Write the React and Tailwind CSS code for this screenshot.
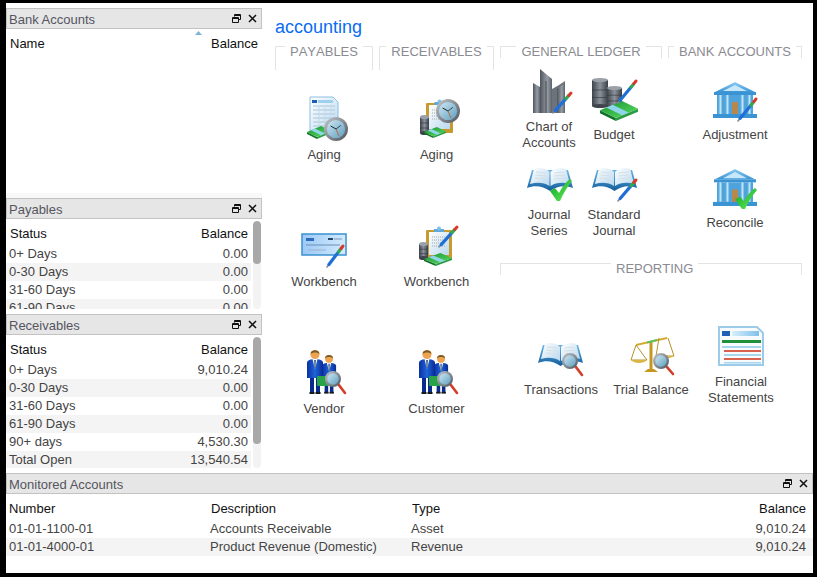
import React from 'react';

const font = { fontFamily: '"Liberation Sans", Arial, sans-serif' };

const Defs = () => (
  <svg className="block h-0 w-0" aria-hidden="true">
    <defs>
      <linearGradient id="money" x1="0" y1="0" x2="1" y2="1">
        <stop offset="0" stopColor="#178f35" />
        <stop offset="1" stopColor="#5be05f" />
      </linearGradient>
      <linearGradient id="steel" x1="0" y1="0" x2="1" y2="0">
        <stop offset="0" stopColor="#3f444c" />
        <stop offset="0.5" stopColor="#8b929b" />
        <stop offset="1" stopColor="#3a3f47" />
      </linearGradient>
      <linearGradient id="slab" x1="0" y1="0" x2="1" y2="0">
        <stop offset="0" stopColor="#4e545d" />
        <stop offset="0.6" stopColor="#989da5" />
        <stop offset="1" stopColor="#5c626b" />
      </linearGradient>
      <linearGradient id="face" x1="0" y1="0" x2="1" y2="1">
        <stop offset="0" stopColor="#cfe7f2" />
        <stop offset="1" stopColor="#5e9fc0" />
      </linearGradient>
      <linearGradient id="ring" x1="0" y1="0" x2="1" y2="1">
        <stop offset="0" stopColor="#c4c9ce" />
        <stop offset="1" stopColor="#4c5259" />
      </linearGradient>
      <linearGradient id="bank" x1="0" y1="0" x2="0" y2="1">
        <stop offset="0" stopColor="#8fcdf2" />
        <stop offset="1" stopColor="#3a94d4" />
      </linearGradient>
      <linearGradient id="column" x1="0" y1="0" x2="1" y2="0">
        <stop offset="0" stopColor="#3f9ad8" />
        <stop offset="0.5" stopColor="#bde5fa" />
        <stop offset="1" stopColor="#3a92cf" />
      </linearGradient>
      <linearGradient id="check" x1="0" y1="0" x2="1" y2="1">
        <stop offset="0" stopColor="#08a02a" />
        <stop offset="1" stopColor="#6af055" />
      </linearGradient>
      <linearGradient id="cheque" x1="0" y1="0" x2="1" y2="0">
        <stop offset="0" stopColor="#9cc9f6" />
        <stop offset="1" stopColor="#d3eaff" />
      </linearGradient>
      <linearGradient id="page" x1="0" y1="0" x2="1" y2="1">
        <stop offset="0" stopColor="#ffffff" />
        <stop offset="1" stopColor="#b9d8ee" />
      </linearGradient>
      <linearGradient id="cover" x1="0" y1="0" x2="0" y2="1">
        <stop offset="0" stopColor="#6fb6e6" />
        <stop offset="1" stopColor="#0f5c9c" />
      </linearGradient>
      <linearGradient id="suit" x1="0" y1="0" x2="1" y2="0">
        <stop offset="0" stopColor="#0c2fa4" />
        <stop offset="0.5" stopColor="#1d66d8" />
        <stop offset="1" stopColor="#0b2a94" />
      </linearGradient>
      <linearGradient id="title" x1="0" y1="0" x2="1" y2="0">
        <stop offset="0" stopColor="#d8effb" />
        <stop offset="1" stopColor="#7fc0ea" />
      </linearGradient>
    </defs>
  </svg>
);

const Pen = ({ x1, y1, x2, y2 }) => {
  const at = (t) => [x1 + (x2 - x1) * t, y1 + (y2 - y1) * t];
  const [ax, ay] = at(0.12);
  const [bx, by] = at(0.72);
  const [cx, cy] = at(0.88);
  return (
    <g strokeLinecap="round">
      <line x1={x1} y1={y1} x2={ax} y2={ay} stroke="#7d8a99" strokeWidth="1.6" />
      <line x1={ax} y1={ay} x2={bx} y2={by} stroke="#1f6fd6" strokeWidth="3.2" />
      <line x1={bx} y1={by} x2={cx} y2={cy} stroke="#33a853" strokeWidth="3.2" />
      <line x1={cx} y1={cy} x2={x2} y2={y2} stroke="#d9392b" strokeWidth="3" />
    </g>
  );
};

const Money = ({ x, y, w, h }) => (
  <g transform={`translate(${x} ${y}) scale(${w / 24} ${h / 13})`}>
    <polygon points="0,6 10,11 10,13 0,8" fill="#11722b" />
    <polygon points="10,11 24,5 24,7 10,13" fill="#2a9c45" />
    <polygon points="0,6 14,0 24,5 10,11" fill="url(#money)" />
    <polygon points="4,4.2 8,2.5 18,7.5 14,9.2" fill="#8fd6ea" />
  </g>
);

const Clock = ({ cx, cy, r }) => (
  <g>
    <circle cx={cx} cy={cy} r={r} fill="url(#ring)" />
    <circle cx={cx} cy={cy} r={r * 0.76} fill="url(#face)" />
    <line x1={cx} y1={cy} x2={cx - r * 0.45} y2={cy - r * 0.25} stroke="#20262c" strokeWidth="1" />
    <line x1={cx} y1={cy} x2={cx + r * 0.25} y2={cy + r * 0.6} stroke="#b5683a" strokeWidth="1" />
    <line x1={cx} y1={cy} x2={cx + r * 0.4} y2={cy - r * 0.3} stroke="#20262c" strokeWidth="0.8" />
  </g>
);

const Lens = ({ cx, cy, r, hx, hy }) => (
  <g>
    <line x1={cx + r * 0.7} y1={cy + r * 0.7} x2={hx} y2={hy} stroke="#d2402c" strokeWidth="2.6" strokeLinecap="round" />
    <circle cx={cx} cy={cy} r={r} fill="url(#ring)" />
    <circle cx={cx} cy={cy} r={r * 0.72} fill="url(#face)" />
  </g>
);

const Tick = ({ x, y, w, h }) => (
  <g transform={`translate(${x} ${y}) scale(${w / 22} ${h / 22})`}>
    <path d="M0 12 L5 9 L9 14 C12 8 16 3 20 0 L22 2 C17 8 13 15 10 22 L7 22 Z" fill="url(#check)" />
  </g>
);

const Cylinder = ({ x, y, w, h }) => (
  <g>
    <rect x={x} y={y + 2} width={w} height={h - 4} fill="url(#steel)" />
    <ellipse cx={x + w / 2} cy={y + h - 2} rx={w / 2} ry="2" fill="#3f444c" />
    <ellipse cx={x + w / 2} cy={y + 2} rx={w / 2} ry="2" fill="#9aa0a8" />
    <line x1={x} y1={y + h * 0.4} x2={x + w} y2={y + h * 0.4} stroke="#30343a" strokeWidth="0.6" />
    <line x1={x} y1={y + h * 0.65} x2={x + w} y2={y + h * 0.65} stroke="#30343a" strokeWidth="0.6" />
  </g>
);

const Clipboard = ({ x, y, w, h }) => (
  <g>
    <rect x={x} y={y + 3} width={w} height={h - 3} rx="1" fill="#c79a2f" />
    <rect x={x + 3} y={y + 5} width={w - 6} height={h - 9} fill="url(#page)" />
    {[10, 13, 16, 19].map((d) => (
      <line key={d} x1={x + 6} y1={y + d} x2={x + w - 7} y2={y + d} stroke="#a9a9a9" strokeWidth="1" strokeDasharray="1 1" />
    ))}
    <rect x={x + w / 2 - 5} y={y + 2} width="10" height="3" fill="#5ea9dc" />
    <circle cx={x + w / 2} cy={y + 1.5} r="2" fill="#7cbfe8" />
  </g>
);

const Bank = ({ x, y, w, h }) => (
  <g transform={`translate(${x} ${y}) scale(${w / 44} ${h / 36})`}>
    <polygon points="22,0 42,10 2,10" fill="url(#bank)" />
    <polygon points="22,3 34,9 10,9" fill="#c6e8fa" />
    <rect x="1" y="10" width="42" height="3" fill="#3a94d4" />
    <rect x="4" y="13" width="36" height="19" fill="#4ea3dc" />
    {[5, 12, 27, 34].map((cx) => (
      <rect key={cx} x={cx} y="13" width="5" height="19" fill="url(#column)" />
    ))}
    <rect x="19" y="20" width="6" height="12" fill="#b8874a" />
    <rect x="0" y="32" width="44" height="4" fill="#3a94d4" />
  </g>
);

const Book = ({ x, y, w, h }) => (
  <g transform={`translate(${x} ${y}) scale(${w / 46} ${h / 23})`}>
    <path d="M5 2 L0 20 C8 17 16 18 23 23 C30 18 38 17 46 20 L41 2 Z" fill="url(#cover)" />
    <path d="M7 1 C12 -1 19 0 22.5 4 L22.5 18 C17 14.500 10 14 3 16 Z" fill="url(#page)" />
    <path d="M39 1 C34 -1 27 0 23.5 4 L23.5 18 C29 14.500 36 14 43 16 Z" fill="url(#page)" />
    <path d="M9 4 L19 5 M8.500 7 L19 8 M8 10 L19 11 M27 5 L37 4 M27 8 L37.500 7 M27 11 L38 10" stroke="#d5dfe6" strokeWidth="1" fill="none" />
  </g>
);

const Person = ({ x, y, s }) => (
  <g transform={`translate(${x} ${y}) scale(${s})`}>
    <rect x="3" y="28" width="4" height="16" fill="#0a2a8c" />
    <rect x="9" y="28" width="4" height="16" fill="#0a2a8c" />
    <rect x="2.500" y="43" width="5" height="2" fill="#14181f" />
    <rect x="8.500" y="43" width="5" height="2" fill="#14181f" />
    <path d="M0 14 C0 11 4 10 8 10 C12 10 16 11 16 14 L16 29 L0 29 Z" fill="url(#suit)" />
    <polygon points="5.500,10 10.500,10 8,20" fill="#ffffff" />
    <polygon points="7.300,11 8.700,11 8.400,19 7.600,19" fill="#12315e" />
    <circle cx="8" cy="5.500" r="4.500" fill="#eea24e" />
    <path d="M3.500 5 C3.500 0 12.500 0 12.500 5 C10 3 6 3 3.500 5 Z" fill="#7a5a2a" />
  </g>
);

const icons = {
  agingPay: (
    <>
      <path d="M10 1 H33 L38 6 V37 H10 Z" fill="url(#page)" stroke="#8cc0e4" />
      <rect x="12" y="4" width="5" height="3" fill="#1f5fb5" />
      <rect x="18" y="4" width="15" height="3" fill="#9fd0ee" />
      {[10, 14, 18, 22, 26, 30].map((d) => (
        <line key={d} x1="13" y1={d} x2="35" y2={d} stroke="#a7c6dd" />
      ))}
      {[19, 25, 31].map((d) => (
        <line key={d} x1={d} y1="10" x2={d} y2="32" stroke="#c4d9e8" />
      ))}
      <Money x={7} y={30} w={24} h={13} />
      <Clock cx={36} cy={33} r={12} />
    </>
  ),
  agingRec: (
    <>
      <Clipboard x={13} y={4} w={27} h={33} />
      <Cylinder x={7} y={19} w={9} h={20} />
      <Money x={11} y={31} w={22} h={11} />
      <Clock cx={35} cy={15} r={12} />
    </>
  ),
  cheque: (
    <>
      <rect x="2" y="11" width="44" height="21" fill="url(#cheque)" stroke="#3a91cf" strokeWidth="1.500" />
      <rect x="6" y="15" width="8" height="3" fill="#2b6bbd" />
      <rect x="28" y="15" width="5" height="2" fill="#27466e" />
      <line x1="34" y1="16" x2="42" y2="16" stroke="#7d97b4" />
      <line x1="6" y1="22" x2="40" y2="22" stroke="#6f8fb2" />
      <line x1="8" y1="27" x2="26" y2="27" stroke="#9ab4cf" />
      <Pen x1={27} y1={44} x2={43} y2={23} />
    </>
  ),
  workbenchRec: (
    <>
      <Clipboard x={14} y={4} w={26} h={32} />
      <Cylinder x={7} y={19} w={9} h={18} />
      <Money x={12} y={30} w={28} h={13} />
      <Pen x1={27} y1={24} x2={45} y2={4} />
    </>
  ),
  people: (
    <>
      <Person x={22} y={4} s={0.88} />
      <Person x={7} y={-1} s={1} />
      <rect x="17" y="26" width="14" height="10" rx="1" fill="#2aa24a" />
      <Lens cx={33} cy={29} r={8} hx={45} hy={43} />
    </>
  ),
  chart: (
    <g transform="translate(0 -1)">
      <polygon points="8,16 15,20 15,46 8,46" fill="url(#slab)" />
      <polygon points="15,2 27,12 27,46 15,46" fill="url(#slab)" />
      <polygon points="27,22 34,18 40,14 40,46 27,46" fill="#6d737b" />
      <polygon points="32,22 40,16 40,46 32,46" fill="url(#slab)" />
      <line x1="21" y1="14" x2="21" y2="46" stroke="#454a52" />
      <Pen x1={28} y1={46} x2={46} y2={26} />
    </g>
  ),
  budget: (
    <g transform="translate(0 -3)">
      <Cylinder x={2} y={5} w={16} h={30} />
      <Cylinder x={17} y={13} w={15} h={23} />
      <Money x={10} y={28} w={38} h={20} />
      <Pen x1={28} y1={30} x2={46} y2={8} />
    </g>
  ),
  adjustment: (
    <g transform="translate(0 -3)">
      <Bank x={2} y={9} w={44} h={36} />
      <Pen x1={27} y1={48} x2={45} y2={26} />
    </g>
  ),
  journalSeries: (
    <g transform="translate(0 -1)">
      <Book x={2} y={13} w={46} h={23} />
      <Tick x={25} y={24} w={22} h={22} />
    </g>
  ),
  journalStd: (
    <g transform="translate(0 -1)">
      <Book x={2} y={13} w={45} h={23} />
      <Pen x1={28} y1={46} x2={46} y2={25} />
    </g>
  ),
  reconcile: (
    <g transform="translate(0 1)">
      <Bank x={2} y={4} w={44} h={37} />
      <Tick x={24} y={23} w={22} h={21} />
    </g>
  ),
  transactions: (
    <g transform="translate(0 1)">
      <Book x={1} y={11} w={45} h={23} />
      <Lens cx={33} cy={29} r={8} hx={45} hy={43} />
    </g>
  ),
  trial: (
    <g transform="translate(0 -3)">
      <rect x="22.500" y="14" width="3" height="28" fill="#c4971f" />
      <polygon points="17,44 31,44 27,41 21,41" fill="#c4971f" />
      <polygon points="9,16 40,9 40,11 9,18" fill="#d4a92b" />
      <polygon points="20,13.500 30,11 30,13 20,15.500" fill="#58c060" />
      <path d="M9 17 L4 32 H20 Z M32 10 L29 28 H47 L41 10" fill="none" stroke="#b8922a" />
      <path d="M4 32 C7 36 17 36 20 32 Z" fill="#d8b545" />
      <path d="M29 28 C32 31 44 31 47 28 Z" fill="#d8b545" />
      <Lens cx={34} cy={33} r={8} hx={46} hy={46} />
    </g>
  ),
  financial: (
    <g transform="translate(0 -4)">
      <path d="M2 8 H40 L46 14 V46 H2 Z" fill="#f7fbfe" stroke="#9ccbea" strokeWidth="2" />
      <rect x="5" y="12" width="8" height="5" fill="#1f5fb5" />
      <rect x="15" y="12" width="27" height="5" fill="url(#title)" />
      <rect x="5" y="21" width="39" height="3" fill="#1f8f3a" />
      <rect x="5" y="27" width="39" height="2" fill="#a9d6ee" />
      <rect x="7" y="31" width="37" height="2" fill="#d8604f" />
      <rect x="7" y="35" width="37" height="2" fill="#a9d6ee" />
      <rect x="7" y="39" width="37" height="2" fill="#d8604f" />
      <rect x="7" y="43" width="37" height="1.500" fill="#a9d6ee" />
    </g>
  ),
};

const Icon = ({ name }) => (
  <svg width="48" height="48" viewBox="0 0 48 48" className="block shrink-0 overflow-visible">
    {icons[name]}
  </svg>
);

const LaunchItem = ({ icon, label, lines }) => (
  <div className="flex flex-col items-center gap-[3px]">
    <Icon name={icon} />
    <div className="text-center text-[13px] leading-4 whitespace-nowrap text-[#444444]">
      {label}
      {lines && <br />}
      {lines}
    </div>
  </div>
);

const Legend = ({ title, className, tall, leftClass }) => (
  <div className={`flex ${tall ? 'h-[24px]' : 'h-[12px]'} ${className || ''}`}>
    <div className={`border-t border-l border-[#e3e3e3] ${leftClass || 'flex-1'}`} />
    <div className="-mt-px px-[5px] text-[13px] leading-[14px] text-[#8a8a92] whitespace-nowrap [font-kerning:none]">{title}</div>
    <div className="flex-1 border-t border-r border-[#e3e3e3]" />
  </div>
);

const PanelHeader = ({ title }) => (
  <div className="flex h-[21px] shrink-0 items-center justify-between border border-[#c2c2c2] bg-[#e6e6e6] pl-[2px] pr-[4px]">
    <span className="pt-[2px] text-[13px] leading-4 text-[#55555f]">{title}</span>
    <div className="flex items-center gap-[7px]">
      <svg width="9" height="9" viewBox="0 0 9 9">
        <path d="M2.500 .5 H8.500 V5.500 H6.500 M2.500 .5 V2.500 M2.500 1.500 H8.500" fill="none" stroke="#111" />
        <path d="M.5 3.500 H6.500 V8.500 H.5 Z M.5 4.500 H6.500" fill="none" stroke="#111" />
      </svg>
      <svg width="9" height="9" viewBox="0 0 9 9">
        <path d="M1 1 L8 8 M8 1 L1 8" stroke="#111" strokeWidth="1.500" />
      </svg>
    </div>
  </div>
);

const Scrollbar = ({ thumb }) => (
  <div className="mt-[2px] mr-px w-[8px] shrink-0 overflow-hidden rounded-full bg-[#f3f3f3]">
    <div className={`rounded-full bg-[#a8a8a8] ${thumb}`} />
  </div>
);

const StatusTable = ({ rows }) => (
  <div className="min-w-0 flex-1">
    <div className="flex h-[26px] justify-between pt-[7px] pl-[4px] pr-[3px] text-[13px] leading-4 text-[#111111]">
      <span>Status</span>
      <span>Balance</span>
    </div>
    {rows.map((row, index) => (
      <div
        key={row[0]}
        className={`flex h-[18px] items-center justify-between pl-[3px] pr-[3px] text-[13px] leading-[18px] text-[#444444] ${index % 2 ? 'bg-[#f4f4f4]' : ''}`}
      >
        <span>{row[0]}</span>
        <span>{row[1]}</span>
      </div>
    ))}
  </div>
);

const payables = [
  ['0+ Days', '0.00'],
  ['0-30 Days', '0.00'],
  ['31-60 Days', '0.00'],
  ['61-90 Days', '0.00'],
];

const receivables = [
  ['0+ Days', '9,010.24'],
  ['0-30 Days', '0.00'],
  ['31-60 Days', '0.00'],
  ['61-90 Days', '0.00'],
  ['90+ days', '4,530.30'],
  ['Total Open', '13,540.54'],
];

const monitored = [
  ['01-01-1100-01', 'Accounts Receivable', 'Asset', '9,010.24'],
  ['01-01-4000-01', 'Product Revenue (Domestic)', 'Revenue', '9,010.24'],
];

const App = () => {
  return (
    <div className="h-[577px] w-[817px] overflow-hidden bg-black pt-[3px] pb-[4px] pl-[6px] pr-[4px]" style={font}>
      <Defs />
      <div className="h-[570px] bg-white">
        <div className="flex h-[470px]">
          {/* left column */}
          <div className="flex w-[256px] shrink-0 flex-col pt-[5px]">
            <PanelHeader title="Bank Accounts" />
            <div className="h-[164px] shrink-0">
              <div className="relative flex h-[26px] justify-between pt-[7px] pl-[4px] pr-[4px] text-[13px] leading-4 text-[#111111]">
                <span>Name</span>
                <span>Balance</span>
                <svg width="7" height="4" viewBox="0 0 7 4" className="absolute left-[189px] top-[2px]">
                  <polygon points="3.500,0 7,4 0,4" fill="#7fb2d6" />
                </svg>
              </div>
            </div>
            <div className="h-[5px] shrink-0 bg-[#f8f8f8]" />
            <PanelHeader title="Payables" />
            <div className="flex h-[90px] shrink-0 gap-[2px] overflow-hidden">
              <StatusTable rows={payables} />
              <Scrollbar thumb="h-[43px]" />
            </div>
            <div className="h-[5px] shrink-0" />
            <PanelHeader title="Receivables" />
            <div className="flex h-[133px] shrink-0 gap-[2px] overflow-hidden">
              <StatusTable rows={receivables} />
              <Scrollbar thumb="h-[107px]" />
            </div>
          </div>

          {/* launch pad */}
          <div className="flex-1 pl-[13px] pr-[11px]">
            <div className="pt-[13px] text-[18px] leading-[22px] text-[#0a6cf0]">accounting</div>
            <div className="mt-[8px] flex gap-[6px]">
              <div className="w-[98px]">
                <Legend title="PAYABLES" tall />
                <div className="mt-[26px] flex flex-col items-center gap-[60px]">
                  <LaunchItem icon="agingPay" label="Aging" />
                  <LaunchItem icon="cheque" label="Workbench" />
                  <LaunchItem icon="people" label="Vendor" />
                </div>
              </div>
              <div className="w-[115px]">
                <Legend title="RECEIVABLES" tall />
                <div className="mt-[26px] flex flex-col items-center gap-[60px]">
                  <LaunchItem icon="agingRec" label="Aging" />
                  <LaunchItem icon="workbenchRec" label="Workbench" />
                  <LaunchItem icon="people" label="Customer" />
                </div>
              </div>
              <div className="w-[302px]">
                <div className="flex gap-[6px]">
                  <div className="w-[162px]">
                    <Legend title="GENERAL LEDGER" />
                    <div className="mt-[7px] grid grid-cols-[64px_66px] grid-rows-[88px_88px] items-center justify-items-center pl-[17px]">
                      <LaunchItem icon="chart" label="Chart of" lines="Accounts" />
                      <LaunchItem icon="budget" label="Budget" />
                      <LaunchItem icon="journalSeries" label="Journal" lines="Series" />
                      <LaunchItem icon="journalStd" label="Standard" lines="Journal" />
                    </div>
                  </div>
                  <div className="w-[134px]">
                    <Legend title="BANK ACCOUNTS" />
                    <div className="mt-[7px] grid grid-rows-[88px_88px] items-center justify-items-center">
                      <LaunchItem icon="adjustment" label="Adjustment" />
                      <LaunchItem icon="reconcile" label="Reconcile" />
                    </div>
                  </div>
                </div>
                <Legend title="REPORTING" className="mt-[22px]" leftClass="w-[111px] flex-none" />
                <div className="mt-[48px] grid grid-cols-3 items-center justify-items-center px-[16px]">
                  <LaunchItem icon="transactions" label="Transactions" />
                  <LaunchItem icon="trial" label="Trial Balance" />
                  <LaunchItem icon="financial" label="Financial" lines="Statements" />
                </div>
              </div>
            </div>
          </div>
        </div>

        {/* monitored accounts */}
        <PanelHeader title="Monitored Accounts" />
        <div className="grid h-[26px] grid-cols-[202px_201px_1fr_auto] pt-[7px] pl-[3px] pr-[7px] text-[13px] leading-4 text-[#111111]">
          <span>Number</span>
          <span>Description</span>
          <span>Type</span>
          <span>Balance</span>
        </div>
        {monitored.map((row, index) => (
          <div
            key={row[0]}
            className={`grid h-[18px] grid-cols-[201px_201px_1fr_auto] items-center pl-[3px] pr-[7px] text-[13px] leading-[18px] text-[#444444] ${index % 2 ? 'bg-[#f4f4f4]' : ''}`}
          >
            {row.map((cell) => (
              <span key={cell}>{cell}</span>
            ))}
          </div>
        ))}
      </div>
    </div>
  );
};

export default App;
